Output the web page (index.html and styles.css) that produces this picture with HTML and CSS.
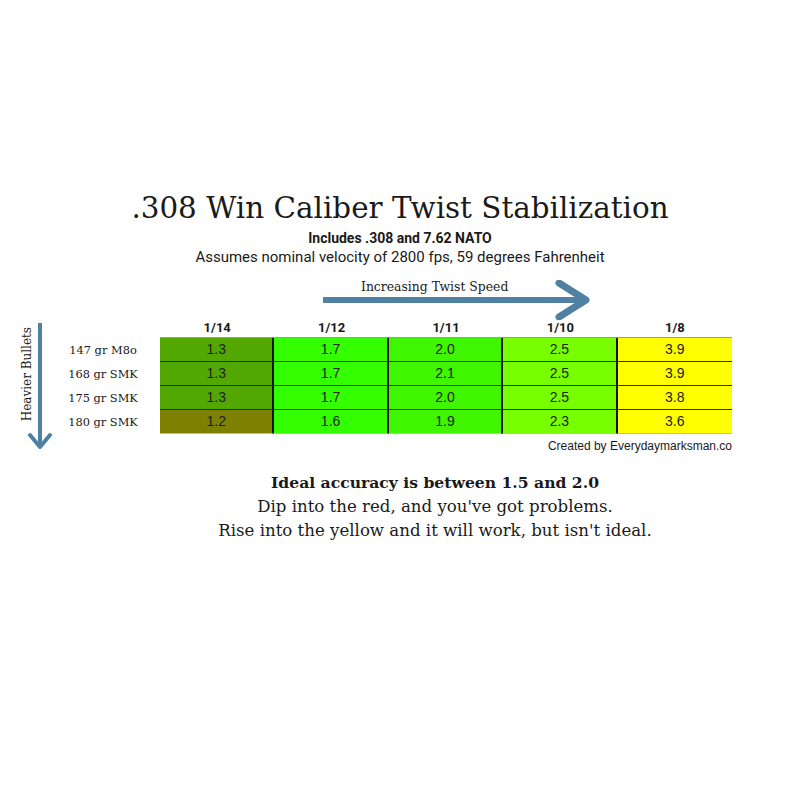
FILE: index.html
```html
<!DOCTYPE html>
<html>
<head>
<meta charset="utf-8">
<link rel="stylesheet" href="styles.css">
</head>
<body>
<div class="page">
  <h1 class="title">.308 Win Caliber Twist Stabilization</h1>
  <div class="sub">Includes .308 and 7.62 NATO</div>
  <div class="note">Assumes nominal velocity of 2800 fps, 59 degrees Fahrenheit</div>

  <div class="twist">
    <span class="twist-text">Increasing Twist Speed</span>
    <svg class="twist-arrow" width="275" height="40" viewBox="0 0 275 40">
      <line x1="0" y1="20" x2="262" y2="20" stroke="#4f81a2" stroke-width="6"/>
      <polyline points="236,3 263,20 236,37" fill="none" stroke="#4f81a2" stroke-width="7" stroke-linecap="round" stroke-linejoin="round"/>
    </svg>
  </div>

  <div class="chart">
    <div class="heavier">
      <span class="vtext">Heavier Bullets</span>
      <svg class="down-arrow" width="24" height="128" viewBox="0 0 24 128">
        <line x1="12" y1="0" x2="12" y2="124" stroke="#4f81a2" stroke-width="4"/>
        <polyline points="2,112 12,124 22,112" fill="none" stroke="#4f81a2" stroke-width="4" stroke-linecap="round" stroke-linejoin="round"/>
      </svg>
    </div>
    <div class="labels">
      <div class="lab-head"></div>
      <div class="lab">147 gr M8o</div>
      <div class="lab">168 gr SMK</div>
      <div class="lab">175 gr SMK</div>
      <div class="lab">180 gr SMK</div>
    </div>
    <div class="table">
      <div class="head">1/14</div>
      <div class="head">1/12</div>
      <div class="head">1/11</div>
      <div class="head">1/10</div>
      <div class="head">1/8</div>

      <div class="cell c-olive">1.3</div>
      <div class="cell c-green">1.7</div>
      <div class="cell c-green2">2.0</div>
      <div class="cell c-lime">2.5</div>
      <div class="cell c-yellow last">3.9</div>

      <div class="cell c-olive">1.3</div>
      <div class="cell c-green">1.7</div>
      <div class="cell c-green2">2.1</div>
      <div class="cell c-lime">2.5</div>
      <div class="cell c-yellow last">3.9</div>

      <div class="cell c-olive">1.3</div>
      <div class="cell c-green">1.7</div>
      <div class="cell c-green2">2.0</div>
      <div class="cell c-lime">2.5</div>
      <div class="cell c-yellow last">3.8</div>

      <div class="cell c-brown bottom">1.2</div>
      <div class="cell c-green bottom">1.6</div>
      <div class="cell c-green2 bottom">1.9</div>
      <div class="cell c-lime bottom">2.3</div>
      <div class="cell c-yellow last bottom">3.6</div>
    </div>
  </div>
  <div class="credit">Created by Everydaymarksman.co</div>

  <div class="summary">
    <div class="strong">Ideal accuracy is between 1.5 and 2.0</div>
    <div>Dip into the red, and you've got problems.</div>
    <div>Rise into the yellow and it will work, but isn't ideal.</div>
  </div>
</div>
</body>
</html>
```
FILE: styles.css
```css
html, body {
  margin: 0;
  padding: 0;
  background: #ffffff;
}
.page {
  width: 800px;
  height: 800px;
  padding-top: 188px;
  box-sizing: border-box;
  color: #1a1a1a;
}
.title {
  margin: 0;
  text-align: center;
  font-family: "DejaVu Serif", serif;
  font-weight: normal;
  font-size: 29.4px;
  line-height: 40px;
  color: #1a1a1a;
}
.sub {
  text-align: center;
  font-family: Roboto, sans-serif;
  font-weight: bold;
  font-size: 14px;
  line-height: 18px;
  margin-top: 1px;
}
.note {
  text-align: center;
  font-family: Roboto, sans-serif;
  font-size: 15px;
  line-height: 20px;
}
.twist {
  position: relative;
  margin-left: 323px;
  width: 275px;
  height: 40px;
  margin-top: 18px;
}
.twist-text {
  position: absolute;
  left: 38px;
  top: -6px;
  font-family: "DejaVu Serif", serif;
  font-size: 12.4px;
  line-height: 16px;
  color: #1a1a1a;
}
.twist-arrow {
  position: absolute;
  left: 0;
  top: -5px;
}
.chart {
  display: flex;
  height: 113px;
  margin-top: -4px;
}
.heavier {
  width: 60px;
  height: 113px;
  display: flex;
  align-items: flex-start;
  padding-left: 20px;
  box-sizing: border-box;
}
.vtext {
  writing-mode: vertical-rl;
  transform: rotate(180deg);
  font-family: "DejaVu Serif", serif;
  font-size: 12px;
  line-height: 14px;
  margin-top: 6px;
}
.down-arrow {
  flex: none;
  margin-top: 2px;
  margin-left: -6px;
}
.labels {
  width: 100px;
  padding-right: 14px;
  box-sizing: border-box;
  display: flex;
  flex-direction: column;
  align-items: center;
}
.lab-head {
  height: 17px;
}
.lab {
  height: 24px;
  line-height: 24px;
  font-family: "DejaVu Serif", serif;
  font-size: 11.4px;
  color: #1a1a1a;
  white-space: nowrap;
}
.table {
  width: 572px;
  display: grid;
  grid-template-columns: repeat(5, 1fr);
  grid-template-rows: 17px repeat(4, 24px);
}
.head {
  text-align: center;
  font-family: Roboto, sans-serif;
  font-weight: bold;
  font-size: 13px;
  line-height: 14px;
  border-bottom: 1px solid #9a9a9a;
}
.cell {
  box-sizing: border-box;
  text-align: center;
  font-family: "Liberation Sans", Arial, sans-serif;
  font-size: 14px;
  line-height: 23px;
  color: #222;
  border-right: 2px solid #111;
  border-bottom: 1px solid #2d2d2d;
}
.cell.last {
  border-right: none;
}
.cell.bottom {
  border-bottom: 1px solid #bdbdbd;
}
.c-olive { background: #52a800; }
.c-brown { background: #7d8000; }
.c-green { background: #33ff00; }
.c-green2 { background: #40f500; }
.c-lime { background: #77ff00; }
.c-yellow { background: #ffff00; }
.credit {
  width: 732px;
  text-align: right;
  font-family: "Liberation Sans", Arial, sans-serif;
  font-size: 12px;
  line-height: 14px;
  margin-top: 5px;
  color: #1a1a1a;
}
.summary {
  padding-left: 70px;
  text-align: center;
  font-family: "DejaVu Serif", serif;
  font-size: 16.6px;
  line-height: 24px;
  margin-top: 18px;
  color: #1a1a1a;
}
.strong {
  font-weight: bold;
  font-size: 15.6px;
}
```
